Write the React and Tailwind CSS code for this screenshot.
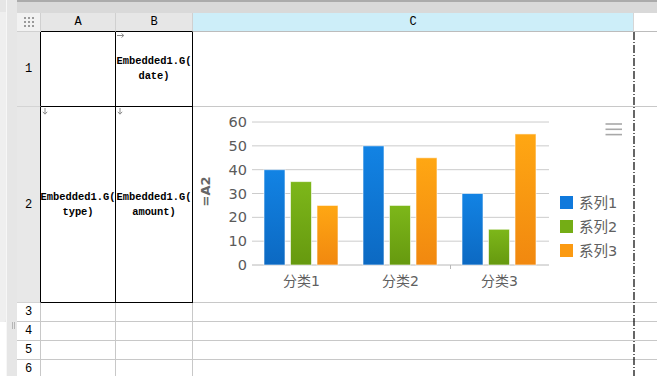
import React from "react";

const cellFont = { fontFamily: '"Liberation Mono", "DejaVu Sans Mono", monospace' };

function ArrowRight() {
  return (
    <svg width="8" height="5" viewBox="0 0 8 5" className="absolute left-[1px] top-[1px]">
      <path d="M0 2.5 H6.5 M4.5 0.5 L6.8 2.5 L4.5 4.5" stroke="#8a8a8a" strokeWidth="1" fill="none" />
    </svg>
  );
}

function ArrowDown() {
  return (
    <svg width="6" height="7" viewBox="0 0 6 7" className="absolute left-[1px] top-[1px]">
      <path d="M3 0 V6 M0.8 3.8 L3 6.2 L5.2 3.8" stroke="#8a8a8a" strokeWidth="1" fill="none" />
    </svg>
  );
}

function CellText({ lines }) {
  return (
    <div className="flex flex-col items-center text-[10.4px] leading-[15px] text-black font-bold" style={cellFont}>
      {lines.map((l) => (
        <span key={l} className="whitespace-nowrap">{l}</span>
      ))}
    </div>
  );
}

function Chart() {
  const data = [
    [40, 35, 25],
    [50, 25, 45],
    [30, 15, 55],
  ];
  const grads = ["gBlue", "gGreen", "gOrange"];
  const y = (v) => 265 - v * 2.383;
  const ticks = [0, 10, 20, 30, 40, 50, 60];
  const labelFont = '"DejaVu Sans", Verdana, sans-serif';
  const cjkFont = '"DejaVu Sans", "Noto Sans CJK SC", sans-serif';
  return (
    <svg width="441" height="195" viewBox="193 107 441 195" className="block">
      <defs>
        <linearGradient id="gBlue" x1="0" y1="0" x2="0" y2="1">
          <stop offset="0" stopColor="#1283e4" />
          <stop offset="1" stopColor="#0c69c2" />
        </linearGradient>
        <linearGradient id="gGreen" x1="0" y1="0" x2="0" y2="1">
          <stop offset="0" stopColor="#7db71a" />
          <stop offset="1" stopColor="#66990f" />
        </linearGradient>
        <linearGradient id="gOrange" x1="0" y1="0" x2="0" y2="1">
          <stop offset="0" stopColor="#ffa713" />
          <stop offset="1" stopColor="#f1880f" />
        </linearGradient>
      </defs>
      {ticks.map((t) => (
        <g key={t}>
          <line x1="252" x2="549" y1={y(t)} y2={y(t)} stroke={t === 0 ? "#b8b8b8" : "#cccccc"} strokeWidth="1" />
          <text x="247" y={y(t) + 5} textAnchor="end" fontSize="14.5" fill="#5a5a5a" fontFamily={labelFont}>
            {t}
          </text>
        </g>
      ))}
      <line x1="450.5" x2="450.5" y1="265" y2="269" stroke="#b8b8b8" strokeWidth="1" />
      <text
        x="209.5"
        y="191.5"
        transform="rotate(-90 209.5 191.5)"
        textAnchor="middle"
        fontSize="13"
        fontWeight="600"
        fill="#666"
        fontFamily={labelFont}
      >
        =A2
      </text>
      {data.map((vals, c) =>
        vals.map((v, i) => {
          const x = 264 + c * 99 + i * 26.5;
          return (
            <rect
              key={`${c}-${i}`}
              x={x}
              y={y(v)}
              width="21"
              height={265 - y(v)}
              fill={`url(#${grads[i]})`}
              stroke="#ffffff"
              strokeOpacity="0.6"
              strokeWidth="1"
            />
          );
        })
      )}
      {["分类1", "分类2", "分类3"].map((l, c) => (
        <text key={l} x={301.5 + c * 99} y="285.5" textAnchor="middle" fontSize="14" fill="#606060" fontFamily={cjkFont}>
          {l}
        </text>
      ))}
      {["系列1", "系列2", "系列3"].map((l, i) => (
        <g key={l}>
          <rect x="560" y={196 + i * 24} width="13" height="13" fill={["#1079dc", "#74ad15", "#fb9a12"][i]} />
          <text x="579" y={208 + i * 24} fontSize="14.5" fill="#606060" fontFamily={cjkFont}>
            {l}
          </text>
        </g>
      ))}
      <g stroke="#a8a8a8" strokeWidth="1.6">
        <line x1="605.5" x2="622" y1="124" y2="124" />
        <line x1="605.5" x2="622" y1="129.3" y2="129.3" />
        <line x1="605.5" x2="622" y1="134.6" y2="134.6" />
      </g>
    </svg>
  );
}

export default function App() {
  const hdr = "flex items-center justify-center text-[12px] text-black";
  return (
    <div className="relative w-[657px] h-[376px] overflow-hidden bg-white flex">
      {/* left strip */}
      <div className="w-[17px] shrink-0 flex bg-[#e6e6e6]">
        <div className="w-[6px] flex flex-col">
          <div className="h-[12px] bg-[#e6e6e6]" />
          <div className="h-[310px] bg-[#efefef] rounded-br-[3px]" />
          <div className="flex-1 bg-white" />
        </div>
        <div className="w-[1px] bg-[#f7f7f7]" />
        <div className="flex-1 flex flex-col">
          <div className="h-[322px]" />
          <div className="h-[7px] flex justify-center gap-[1px] pl-[2px]">
            <div className="w-[1px] bg-[#b5b5b5]" />
            <div className="w-[1px] bg-[#b5b5b5]" />
          </div>
        </div>
      </div>

      {/* main */}
      <div className="flex-1 flex flex-col">
        <div className="h-[13px] shrink-0 bg-[#d9d9d9] border-t-[2px] border-[#ababab]" />
        <div
          className="grid grid-cols-[24px_75px_77px_441px_1fr] grid-rows-[19px_75px_196px_19px_19px_19px_19px]"
          style={cellFont}
        >
          {/* header row */}
          <div className="bg-[#f2f2f2] border-r border-b border-[#d0d0d0] flex items-center justify-center">
            <svg width="10" height="10" viewBox="0 0 10 10">
              {[0, 4, 8].map((yy) =>
                [0, 4, 8].map((xx) => <rect key={`${xx}-${yy}`} x={xx} y={yy} width="2" height="2" fill="#9a9a9a" />)
              )}
            </svg>
          </div>
          <div className={`${hdr} bg-[#e6e6e6] border-r border-[#d0d0d0] border-b border-b-black`}>A</div>
          <div className={`${hdr} bg-[#e6e6e6] border-r border-[#d0d0d0] border-b border-b-black`}>B</div>
          <div className={`${hdr} bg-[#cdeef9] border-r border-[#d6d6d6] border-b border-b-[#bcbcbc]`}>C</div>
          <div className="bg-white border-b border-[#bcbcbc]" />

          {/* row 1 */}
          <div className={`${hdr} bg-[#e8e8e8] border-r border-r-black border-b border-b-[#d4d4d4]`}>1</div>
          <div className="border-r border-b border-black" />
          <div className="relative border-r border-b border-black flex items-center justify-center">
            <ArrowRight />
            <CellText lines={["Embedded1.G(", "date)"]} />
          </div>
          <div className="border-b border-[#c8c8c8]" />
          <div className="border-b border-[#c8c8c8]" />

          {/* row 2 */}
          <div className={`${hdr} bg-[#e8e8e8] border-r border-r-black border-b border-b-[#d4d4d4]`}>2</div>
          <div className="relative border-r border-b border-black flex items-center justify-center">
            <ArrowDown />
            <CellText lines={["Embedded1.G(", "type)"]} />
          </div>
          <div className="relative border-r border-b border-black flex items-center justify-center">
            <ArrowDown />
            <CellText lines={["Embedded1.G(", "amount)"]} />
          </div>
          <div className="border-b border-[#c8c8c8]">
            <Chart />
          </div>
          <div className="border-b border-[#c8c8c8]" />

          {/* rows 3-6 */}
          {[3, 4, 5, 6].map((n) => (
            <React.Fragment key={n}>
              <div className={`${hdr} bg-white border-r border-b border-[#c8c8c8]`}>{n}</div>
              <div className="border-r border-b border-[#c8c8c8]" />
              <div className="border-r border-b border-[#c8c8c8]" />
              <div className="border-b border-[#c8c8c8]" />
              <div className="border-b border-[#c8c8c8]" />
            </React.Fragment>
          ))}
        </div>
      </div>

      {/* page break line */}
      <svg className="absolute left-[633px] top-[32px]" width="2" height="344">
        <line x1="1" x2="1" y1="0" y2="344" stroke="#000" strokeWidth="1.2" strokeDasharray="8 2 1 2" />
      </svg>
    </div>
  );
}
